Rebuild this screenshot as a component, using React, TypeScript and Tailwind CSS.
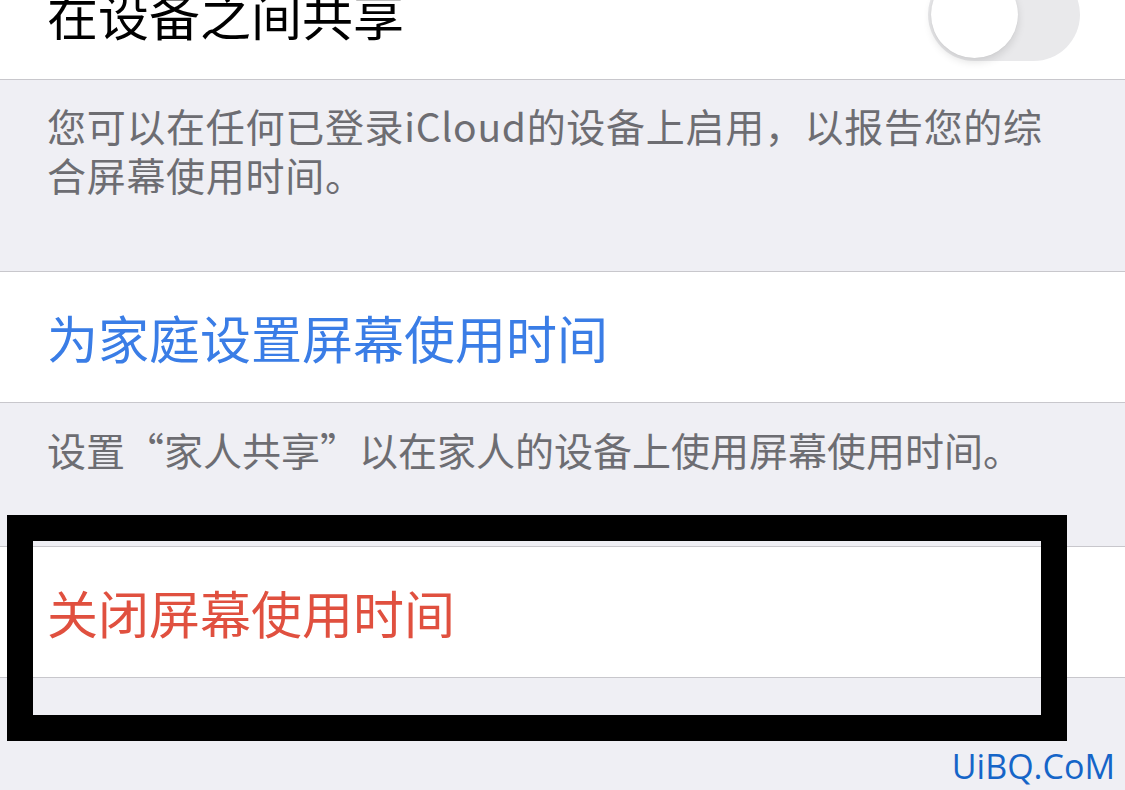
const cjk = { fontFamily: '"Noto Sans CJK SC", "Noto Sans", sans-serif' }

const Toggle = () => (
  <div className="relative h-[93px] w-[152px] rounded-full bg-[#e9e9eb]">
    <div className="absolute left-[3px] top-[3px] h-[87px] w-[87px] rounded-full bg-white shadow-[0_4px_8px_rgba(0,0,0,0.12),0_0_1px_rgba(0,0,0,0.1)]" />
  </div>
)

const Row = ({ children }: { children: React.ReactNode }) => (
  <div className="flex h-[132px] items-center justify-between border-y border-[#c8c7cc] bg-white pl-[47px] pr-[45px]">
    {children}
  </div>
)

const App = () => {
  return (
    <div className="relative h-[790px] w-[1125px] overflow-hidden bg-[#efeff4]" style={cjk}>
      <div className="-mt-[52px]">
        <Row>
          <span className="text-[51px] leading-none text-black">在设备之间共享</span>
          <Toggle />
        </Row>
      </div>

      <div className="h-[191px] px-[47px] pt-[21px] text-[39px] leading-[49px] tracking-[0.7px] text-[#6d6d72]">
        您可以在任何已登录iCloud的设备上启用，以报告您的综
        <br />
        合屏幕使用时间。
      </div>

      <Row>
        <span className="text-[51px] leading-none text-[#3a7de6]">为家庭设置屏幕使用时间</span>
      </Row>

      <div className="h-[143px] px-[47px] pt-[22px] text-[39px] leading-[49px] text-[#6d6d72]">
        设置“家人共享”以在家人的设备上使用屏幕使用时间。
      </div>

      <Row>
        <span className="text-[51px] leading-none text-[#e0503f]">关闭屏幕使用时间</span>
      </Row>

      {/* annotation frame drawn over the screenshot */}
      <div className="absolute left-[7px] top-[515px] h-[226px] w-[1060px] border-[26px] border-black" />

      <div
        className="absolute right-[10px] top-[746px] text-[34px] leading-[40px] text-[#1565c8]"
        style={{ fontFamily: '"Open Sans", "DejaVu Sans", sans-serif' }}
      >
        UiBQ.CoM
      </div>
    </div>
  )
}

export default App
